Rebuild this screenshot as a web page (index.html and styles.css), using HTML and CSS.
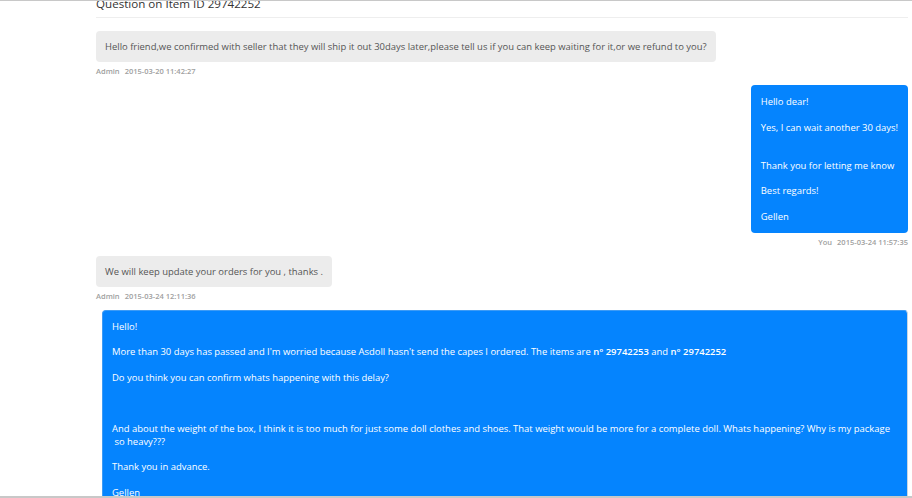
FILE: index.html
```html
<!DOCTYPE html>
<html lang="en">
  <head>
    <meta charset="UTF-8" />
    <title>Question on Item ID 29742252</title>
    <link rel="stylesheet" href="styles.css">
  </head>
  <body>
    <div class="page">
      <h3 class="title">Question on Item ID 29742252</h3>

      <div class="thread">
        <div class="msg msg-in">
          <div class="bubble">Hello friend,we confirmed with seller that they will ship it out 30days later,please tell us if you can keep waiting for it,or we refund to you?</div>
          <div class="meta"><span class="who">Admin</span>2015-03-20 11:42:27</div>
        </div>

        <div class="msg msg-out">
          <div class="bubble">
            <p>Hello dear!</p>
            <p>Yes, I can wait another 30 days!</p>
            <div class="gap"></div>
            <p>Thank you for letting me know</p>
            <p>Best regards!</p>
            <p>Gellen</p>
          </div>
          <div class="meta"><span class="who">You</span>2015-03-24 11:57:35</div>
        </div>

        <div class="msg msg-in">
          <div class="bubble">We will keep update your orders for you , thanks .</div>
          <div class="meta"><span class="who">Admin</span>2015-03-24 12:11:36</div>
        </div>

        <div class="msg msg-out">
          <div class="bubble wide">
            <p>Hello!</p>
            <p>More than 30 days has passed and I'm worried because Asdoll hasn't send the capes I ordered. The items are <b>n° 29742253</b> and <b>n° 29742252</b></p>
            <p>Do you think you can confirm whats happening with this delay?</p>
            <p>&nbsp;</p>
            <p>And about the weight of the box, I think it is too much for just some doll clothes and shoes. That weight would be more for a complete doll. Whats happening? Why is my package<br>&nbsp;so heavy???</p>
            <p>Thank you in advance.</p>
            <p>Gellen</p>
          </div>
        </div>
      </div>
    </div>
    <div class="frame-bottom"></div>
  </body>
</html>
```

FILE: styles.css
```css
* {
  margin: 0;
  padding: 0;
  box-sizing: border-box;
}

html,
body {
  background: #fff;
  overflow: hidden;
}

body {
  height: 498px;
  border-top: 1px solid #c8c8c8;
  font-family: "Open Sans", "Noto Sans", sans-serif;
  color: #333;
}

.page {
  padding: 0 4px 0 96px;
}

.title {
  margin-top: -3px;
  padding-bottom: 7px;
  border-bottom: 1px solid #eee;
  font-size: 11.6px;
  line-height: 12px;
  font-weight: normal;
  color: #333;
}

.thread {
  padding-top: 13px;
}

.msg {
  display: flex;
  flex-direction: column;
  margin-bottom: 7px;
}

.msg-in {
  align-items: flex-start;
}

.msg-out {
  align-items: flex-end;
}

.bubble {
  max-width: 100%;
  border-radius: 4px;
  font-size: 9.45px;
  line-height: 13px;
}

.msg-in .bubble {
  padding: 9px;
  background: #ececec;
  color: #555;
}

.msg-out .bubble {
  padding: 10px;
  background: #0584fe;
  color: #fff;
}

.msg-out .bubble.wide {
  align-self: stretch;
  margin-left: 6px;
  border: 1px solid #3d9bf5;
  border-right-color: #c9d6e2;
  padding: 9px;
}

.bubble p {
  margin-bottom: 12.5px;
}

.bubble p:last-child {
  margin-bottom: 0;
}

.bubble b {
  font-weight: 600;
}

.gap {
  height: 12.5px;
}

.meta {
  margin-top: 3px;
  font-size: 7.5px;
  line-height: 13px;
  font-weight: 600;
  color: #a0a0a0;
}

.who {
  margin-right: 5px;
}

.frame-bottom {
  position: fixed;
  left: 0;
  right: 0;
  bottom: 0;
  height: 2px;
  background: #c8c8c8;
}
```
